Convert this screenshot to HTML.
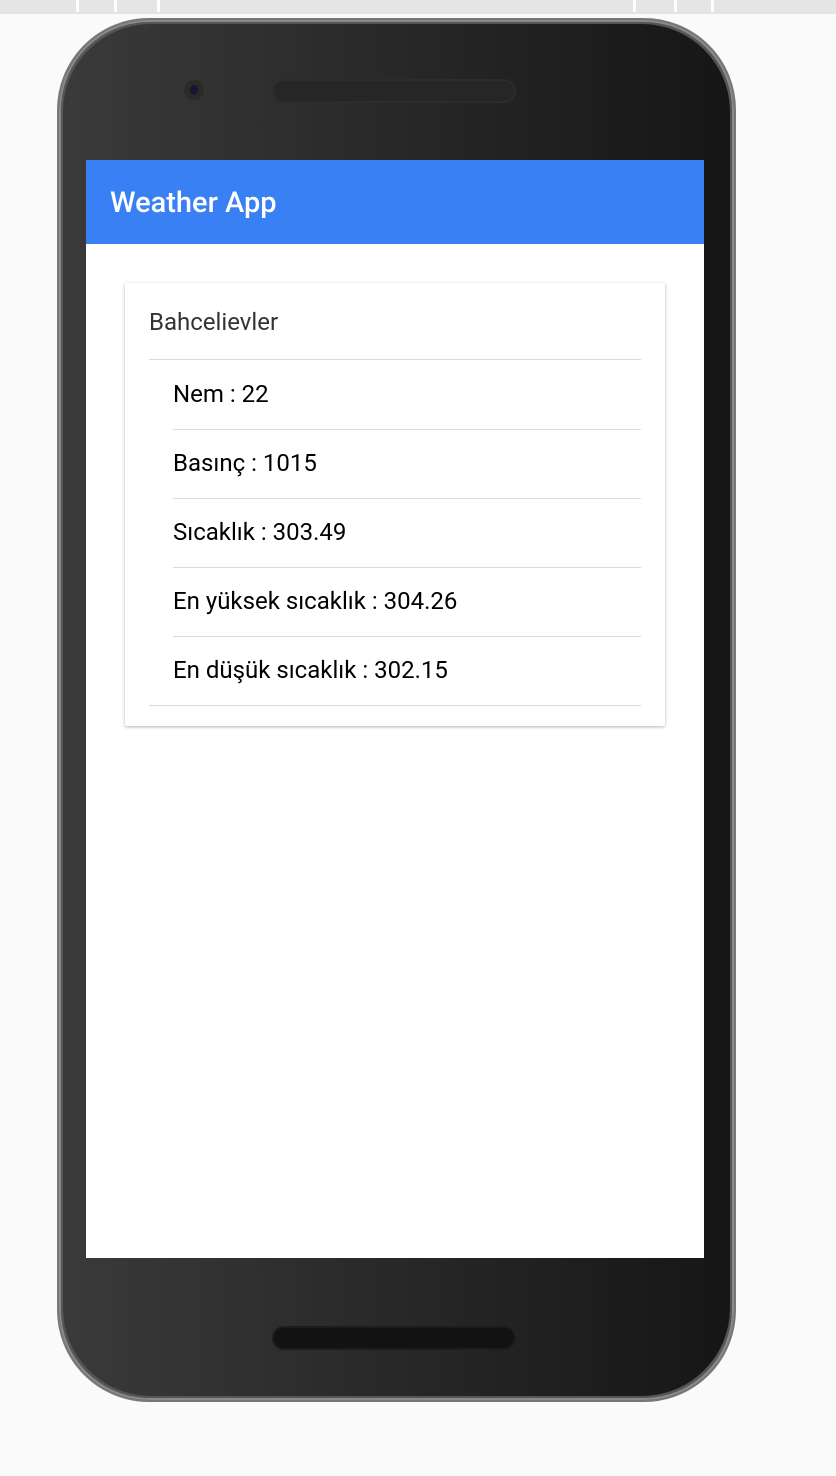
<!DOCTYPE html>
<html><head><meta charset="utf-8"><style>
*{margin:0;padding:0;box-sizing:border-box}
body{width:836px;height:1476px;background:#fafafa;position:relative;overflow:hidden;font-family:"Roboto","Liberation Sans",sans-serif}
.strip{position:absolute;left:0;top:0;width:836px;height:14px;background:#e5e5e5}
.strip i{position:absolute;top:0;width:3px;height:12px;background:#fff}
.phone{position:absolute;left:57px;top:18px;width:679px;height:1384px;border-radius:92px;background:#555;border:2px solid #777;box-shadow:inset 0 0 0 2px #8a8a8a}
.inner{position:absolute;left:4px;top:4px;right:4px;bottom:4px;border-radius:88px;background:linear-gradient(90deg,#3a3a3a,#161616)}
.cam{position:absolute;left:184px;top:80px;width:20px;height:20px;border-radius:50%;background:#2a2a2a}
.cam:after{content:"";position:absolute;left:6px;top:5px;width:8px;height:10px;border-radius:50%;background:#1a1530}
.spk{position:absolute;left:272px;top:79px;width:244px;height:24px;border-radius:12px;background:#262626;border:2px solid #2c2c2c}
.spk2{position:absolute;left:272px;top:1326px;width:244px;height:24px;border-radius:12px;background:#121212;border:2px solid #1c1c1c}
.btn{position:absolute;left:730px;width:6px;background:#444;border-radius:2px}
.screen{position:absolute;left:86px;top:160px;width:618px;height:1098px;background:#fff}
.bar{height:84px;background:#3880f4;color:#fff;font-size:29px;font-weight:500;padding-left:24px;line-height:86px}
.card{position:absolute;left:39px;top:123px;width:540px;height:443px;background:#fff;box-shadow:0 1px 3px rgba(0,0,0,.3);border-radius:2px}
.title{position:absolute;left:24px;top:25px;font-size:24px;color:#333}
.hr{position:absolute;height:1px;background:#dcdcdc;right:24px}
.it{position:absolute;left:48px;font-size:24px;color:#000}
</style></head><body>
<div class="strip"><i style="left:76px"></i><i style="left:114px"></i><i style="left:157px"></i><i style="left:633px"></i><i style="left:674px"></i><i style="left:711px"></i></div>
<div class="btn" style="top:475px;height:85px"></div>
<div class="btn" style="top:613px;height:169px"></div>
<div class="phone"><div class="inner"></div></div>
<div class="cam"></div><div class="spk"></div><div class="spk2"></div>
<div class="screen">
<div class="bar">Weather App</div>
<div class="card">
<div class="title">Bahcelievler</div>
<div class="hr" style="left:24px;top:76px"></div>
<div class="it" style="top:97px">Nem : 22</div>
<div class="hr" style="left:48px;top:146px"></div>
<div class="it" style="top:166px">Basınç : 1015</div>
<div class="hr" style="left:48px;top:215px"></div>
<div class="it" style="top:235px">Sıcaklık : 303.49</div>
<div class="hr" style="left:48px;top:284px"></div>
<div class="it" style="top:304px">En yüksek sıcaklık : 304.26</div>
<div class="hr" style="left:48px;top:353px"></div>
<div class="it" style="top:373px">En düşük sıcaklık : 302.15</div>
<div class="hr" style="left:24px;top:422px"></div>
</div>
</div>
</body></html>
